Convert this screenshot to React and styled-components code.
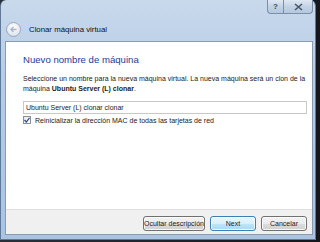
import React from "react";
import styled, { createGlobalStyle } from "styled-components";

const GlobalStyle = createGlobalStyle`
  html, body {
    margin: 0;
    padding: 0;
    background: #20242c;
    font-family: "Liberation Sans", "DejaVu Sans", sans-serif;
  }
`;

const Screen = styled.div`
  width: 320px;
  height: 242px;
  overflow: hidden;
  background: linear-gradient(90deg, #2b2f38 0%, #15171c 100%);
`;

const Window = styled.div`
  position: relative;
  width: 316px;
  height: 240px;
  box-sizing: border-box;
  display: flex;
  flex-direction: column;
  border-radius: 6px 6px 0 0;
  border: 1px solid #5f7a99;
  border-top: none;
  background: linear-gradient(180deg, #c9d9ec 0%, #b7cde6 30%, #aac3e1 100%);
`;

const TitleBar = styled.div`
  height: 40px;
  display: flex;
  align-items: flex-end;
  padding: 0 0 3px 5px;
  box-sizing: border-box;
  gap: 8px;
`;

const BackButton = styled.div`
  width: 15px;
  height: 15px;
  border-radius: 50%;
  box-sizing: border-box;
  border: 1px solid #9aaabb;
  background: radial-gradient(circle at 50% 35%, #ffffff 0%, #e4ebf3 60%, #c7d3e0 100%);
  display: flex;
  align-items: center;
  justify-content: center;
`;

const Title = styled.span`
  font-size: 7.8px;
  color: #111;
  padding-bottom: 3px;
`;

const Caption = styled.div`
  position: absolute;
  top: 0;
  right: 2px;
  display: flex;
`;

const CaptionButton = styled.div`
  width: ${(p) => p.$w}px;
  height: 14px;
  box-sizing: border-box;
  border: 1px solid #7d8fa6;
  border-top: none;
  border-left: ${(p) => (p.$first ? "1px solid #7d8fa6" : "none")};
  border-radius: ${(p) => (p.$first ? "0 0 0 4px" : "0 0 4px 0")};
  background: linear-gradient(180deg, #dfe8f3 0%, #c3d3e6 50%, #b3c7de 100%);
  display: flex;
  align-items: center;
  justify-content: center;
  font-size: 8px;
  font-weight: bold;
  color: #3c4a5c;
`;

const Panel = styled.div`
  flex: 1;
  margin: 1px 2px 4px 4px;
  display: flex;
  flex-direction: column;
  border: 1px solid #8a9bb0;
  background: #fff;
`;

const Content = styled.div`
  flex: 1;
  padding: 12px 5px 0 17px;
  font-size: 7px;
  color: #222;
`;

const Heading = styled.div`
  font-size: 9.6px;
  color: #1c3a93;
  margin-bottom: 9px;
`;

const Para = styled.p`
  margin: 0 0 7px 0;
  line-height: 10px;
`;

const NameInput = styled.div`
  height: 13px;
  box-sizing: border-box;
  border: 1px solid #c8c8c8;
  padding: 0 2px;
  display: flex;
  align-items: center;
  font-size: 7px;
  color: #222;
  margin-bottom: 2px;
`;

const CheckRow = styled.div`
  display: flex;
  align-items: center;
  gap: 4px;
`;

const Box = styled.div`
  width: 8px;
  height: 8px;
  box-sizing: border-box;
  border: 1px solid #8f8f8f;
  background: linear-gradient(135deg, #e9e9e9, #ffffff);
  display: flex;
  align-items: center;
  justify-content: center;
`;

const Footer = styled.div`
  height: 25px;
  box-sizing: border-box;
  background: #f0f0f0;
  border-top: 1px solid #dfdfdf;
  display: flex;
  justify-content: flex-end;
  align-items: flex-end;
  gap: 5px;
  padding: 0 5px 3px 0;
`;

const Button = styled.div`
  width: ${(p) => p.$w}px;
  height: 15px;
  box-sizing: border-box;
  border: 1px solid ${(p) => (p.$default ? "#3c7fb1" : "#707070")};
  border-radius: 3px;
  background: ${(p) =>
    p.$default
      ? "linear-gradient(180deg, #eaf6fd 0%, #d9f0fc 50%, #bee6fd 51%, #a7d9f5 100%)"
      : "linear-gradient(180deg, #f2f2f2 0%, #ebebeb 50%, #dddddd 51%, #cfcfcf 100%)"};
  box-shadow: inset 0 0 0 1px rgba(255, 255, 255, 0.8);
  display: flex;
  align-items: center;
  justify-content: center;
  font-size: 7px;
  color: #222;
  white-space: nowrap;
`;

export default function App() {
  return (
    <Screen>
      <GlobalStyle />
      <Window>
        <Caption>
          <CaptionButton $w={17} $first>?</CaptionButton>
          <CaptionButton $w={29}>
            <svg width="9" height="8" viewBox="0 0 9 8">
              <path d="M1 1 L8 7 M8 1 L1 7" stroke="#4a5566" strokeWidth="1.6" />
            </svg>
          </CaptionButton>
        </Caption>
        <TitleBar>
          <BackButton>
            <svg width="9" height="9" viewBox="0 0 9 9">
              <path d="M7.5 4.5 H2 M4.5 2 L2 4.5 L4.5 7" fill="none" stroke="#aab6c4" strokeWidth="1.4" />
            </svg>
          </BackButton>
          <Title>Clonar máquina virtual</Title>
        </TitleBar>
        <Panel>
          <Content>
            <Heading>Nuevo nombre de máquina</Heading>
            <Para>
              Seleccione un nombre para la nueva máquina virtual. La nueva máquina será un clon de la
              <br />
              máquina <b>Ubuntu Server (L) clonar</b>.
            </Para>
            <NameInput>Ubuntu Server (L) clonar clonar</NameInput>
            <CheckRow>
              <Box>
                <svg width="6" height="6" viewBox="0 0 6 6">
                  <path d="M0.5 3 L2.3 5 L5.5 0.8" fill="none" stroke="#2a4c8c" strokeWidth="1.2" />
                </svg>
              </Box>
              <span>Reinicializar la dirección MAC de todas las tarjetas de red</span>
            </CheckRow>
          </Content>
          <Footer>
            <Button $w={62}>Ocultar descripción</Button>
            <Button $w={46} $default>Next</Button>
            <Button $w={46}>Cancelar</Button>
          </Footer>
        </Panel>
      </Window>
    </Screen>
  );
}
